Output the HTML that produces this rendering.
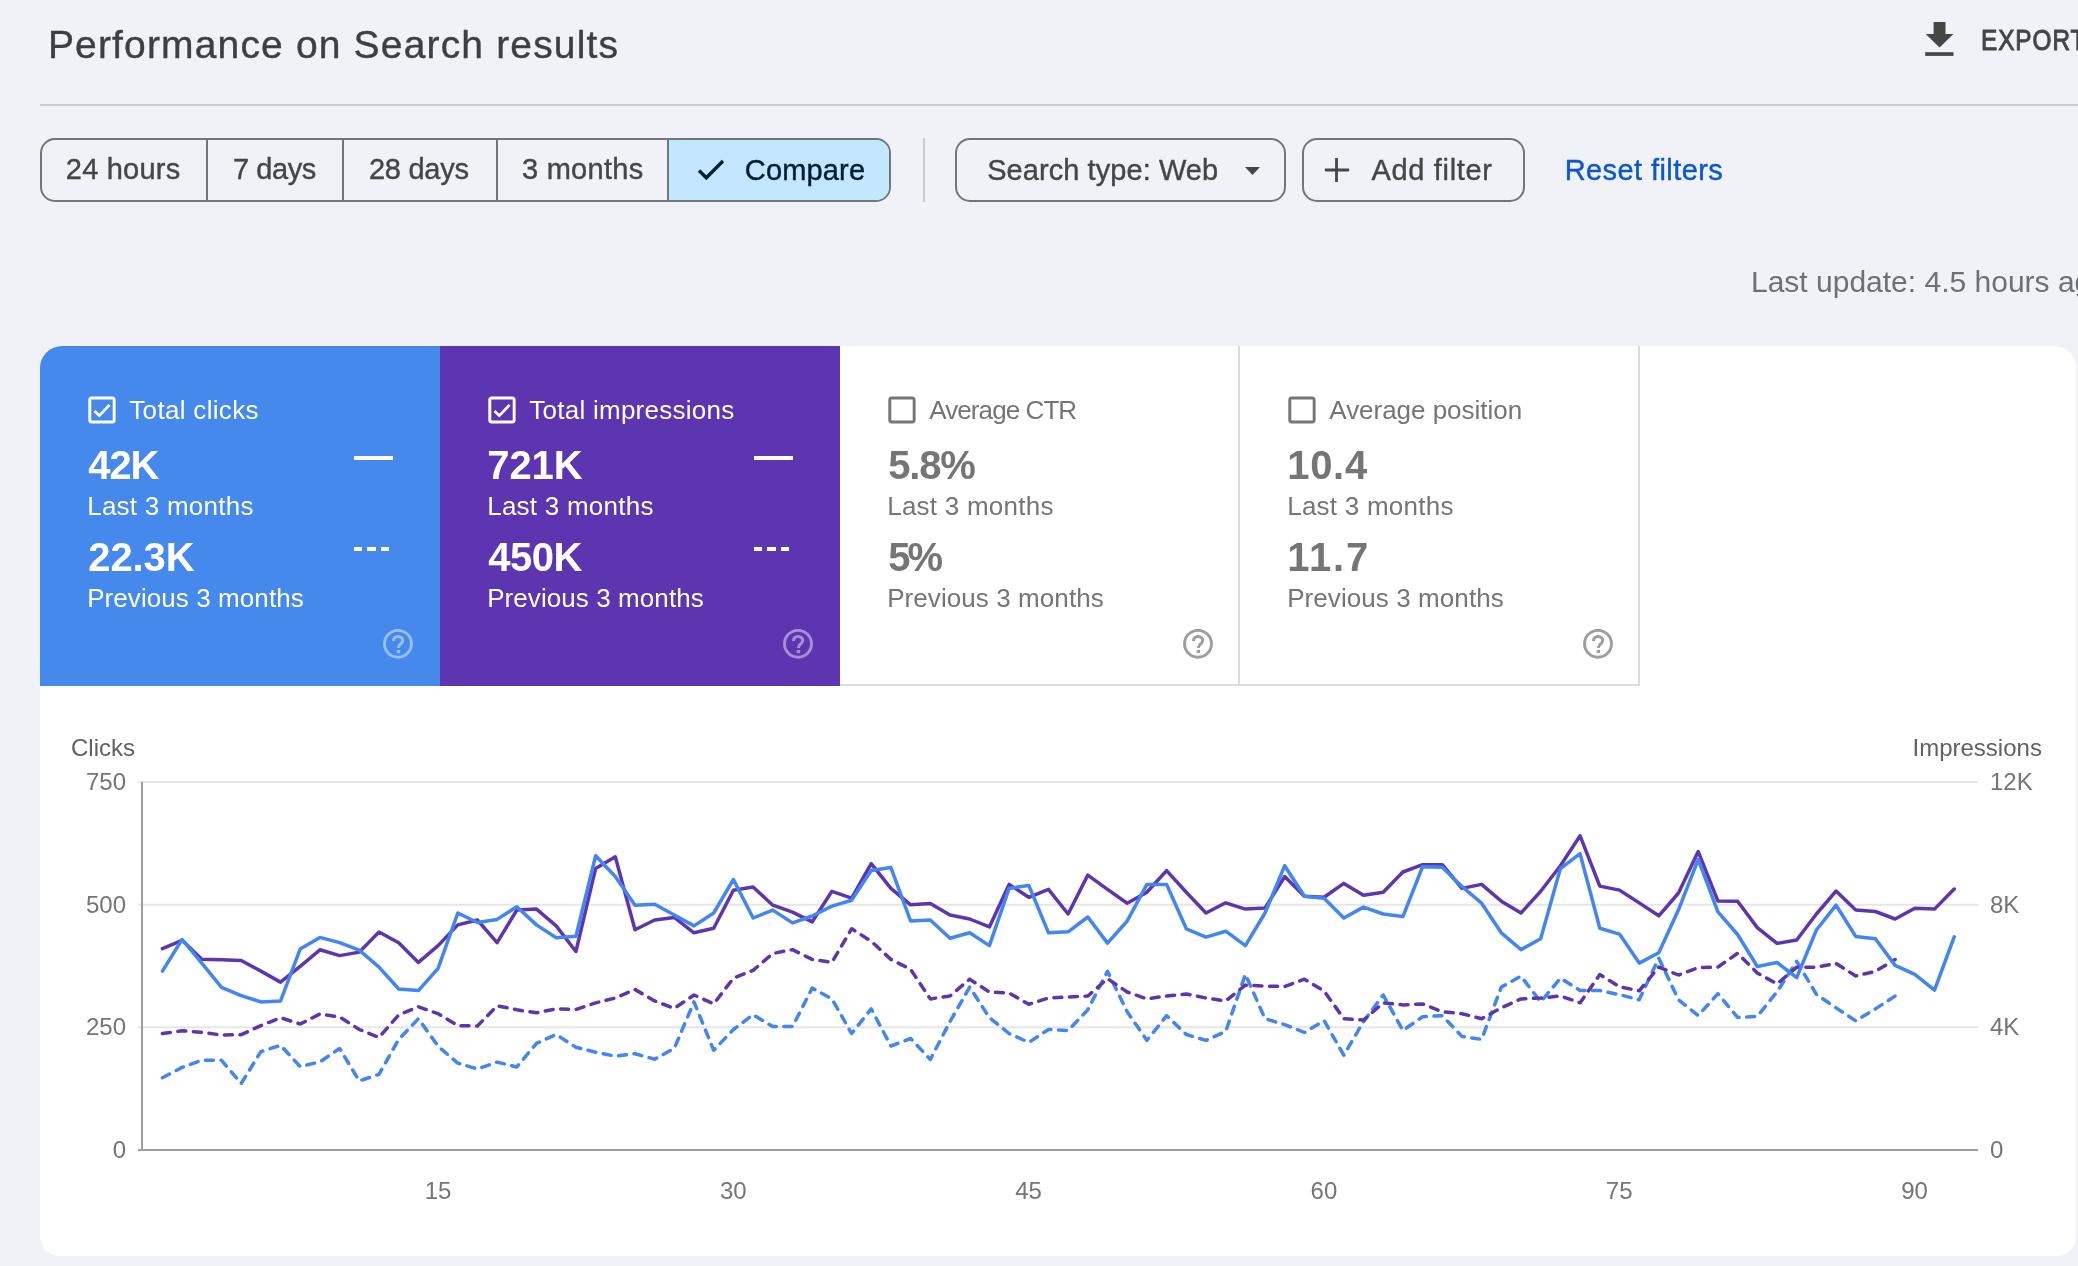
<!DOCTYPE html>
<html><head><meta charset="utf-8"><style>
html,body{margin:0;padding:0;width:2078px;height:1266px;overflow:hidden;background:#f0f2f7;font-family:"Liberation Sans", sans-serif;}
</style></head><body><div style="position:absolute;left:0;top:0;width:2078px;height:1266px;will-change:transform">
<div style="position:absolute;left:47.9px;top:25.1px;font-size:39px;line-height:39px;font-weight:400;color:#3c4043;letter-spacing:1.161px;white-space:nowrap;-webkit-text-stroke:0.4px #3c4043;">Performance on Search results</div>
<svg style="position:absolute;left:1920px;top:18px" width="40" height="42" viewBox="0 0 40 42"><path d="M13.6 4.1h11.9v11.9h7.9L19.55 29.6 5.7 16h7.9z" fill="#444746"/><rect x="5.2" y="34.2" width="28.3" height="3.7" fill="#444746"/></svg>
<div style="position:absolute;left:1980.5px;top:25.5px;font-size:29px;line-height:29px;font-weight:400;color:#444746;letter-spacing:1.1px;white-space:nowrap;transform:scaleX(0.84);transform-origin:0 0;-webkit-text-stroke:1.0px #444746;">EXPORT</div>
<div style="position:absolute;left:40px;top:104px;width:2038px;height:2px;box-sizing:border-box;background:#c7cacf"></div>
<div style="position:absolute;left:40px;top:138px;width:851px;height:64px;box-sizing:border-box;border:2px solid #71767b;border-radius:15px"></div>
<div style="position:absolute;left:205.5px;top:138px;width:2px;height:64px;box-sizing:border-box;background:#71767b"></div>
<div style="position:absolute;left:342px;top:138px;width:2px;height:64px;box-sizing:border-box;background:#71767b"></div>
<div style="position:absolute;left:495.5px;top:138px;width:2px;height:64px;box-sizing:border-box;background:#71767b"></div>
<div style="position:absolute;left:668px;top:140px;width:221px;height:60px;box-sizing:border-box;background:#c2e7ff;border-radius:0 13px 13px 0"></div>
<div style="position:absolute;left:667px;top:138px;width:2px;height:64px;box-sizing:border-box;background:#71767b"></div>
<div style="position:absolute;left:65.8px;top:154.5px;font-size:29px;line-height:29px;font-weight:400;color:#444746;letter-spacing:0.214px;white-space:nowrap;-webkit-text-stroke:0.4px #444746;">24 hours</div>
<div style="position:absolute;left:233.0px;top:154.5px;font-size:29px;line-height:29px;font-weight:400;color:#444746;letter-spacing:-0.44px;white-space:nowrap;-webkit-text-stroke:0.4px #444746;">7 days</div>
<div style="position:absolute;left:369.0px;top:154.5px;font-size:29px;line-height:29px;font-weight:400;color:#444746;letter-spacing:-0.267px;white-space:nowrap;-webkit-text-stroke:0.4px #444746;">28 days</div>
<div style="position:absolute;left:521.9px;top:154.5px;font-size:29px;line-height:29px;font-weight:400;color:#444746;letter-spacing:0.286px;white-space:nowrap;-webkit-text-stroke:0.4px #444746;">3 months</div>
<svg style="position:absolute;left:696px;top:157.4px" width="30" height="24" viewBox="0 0 30 24"><path d="M3 13.5l7.3 7.3L27 4" fill="none" stroke="#001d35" stroke-width="3.4"/></svg>
<div style="position:absolute;left:744.8px;top:155.5px;font-size:29px;line-height:29px;font-weight:400;color:#001d35;letter-spacing:0.167px;white-space:nowrap;-webkit-text-stroke:0.4px #001d35;">Compare</div>
<div style="position:absolute;left:923px;top:138px;width:2px;height:64px;box-sizing:border-box;background:#c7cacf"></div>
<div style="position:absolute;left:955px;top:138px;width:331px;height:64px;box-sizing:border-box;border:2px solid #71767b;border-radius:15px"></div>
<div style="position:absolute;left:987.2px;top:155.5px;font-size:29px;line-height:29px;font-weight:400;color:#444746;letter-spacing:0.067px;white-space:nowrap;-webkit-text-stroke:0.4px #444746;">Search type: Web</div>
<svg style="position:absolute;left:1244px;top:166px" width="17" height="10" viewBox="0 0 17 10"><path d="M1 1h15l-7.5 8z" fill="#444746"/></svg>
<div style="position:absolute;left:1302px;top:138px;width:223px;height:64px;box-sizing:border-box;border:2px solid #71767b;border-radius:15px"></div>
<svg style="position:absolute;left:1322px;top:156px" width="28" height="28" viewBox="0 0 28 28"><path d="M14.5 2v24" stroke="#444746" stroke-width="2.8"/><path d="M4 14h22" stroke="#444746" stroke-width="2.8" stroke-linecap="round"/></svg>
<div style="position:absolute;left:1371.5px;top:155.5px;font-size:29px;line-height:29px;font-weight:400;color:#444746;letter-spacing:0.667px;white-space:nowrap;-webkit-text-stroke:0.4px #444746;">Add filter</div>
<div style="position:absolute;left:1564.7px;top:155.5px;font-size:29px;line-height:29px;font-weight:400;color:#0b57d0;letter-spacing:0.417px;white-space:nowrap;-webkit-text-stroke:0.4px #0b57d0;">Reset filters</div>
<div style="position:absolute;left:1751.0px;top:266.6px;font-size:30px;line-height:30px;font-weight:400;color:#6d7175;letter-spacing:0px;white-space:nowrap;">Last update: 4.5 hours ago</div>
<div style="position:absolute;left:40px;top:346px;width:2036px;height:910px;box-sizing:border-box;background:#fff;border-radius:22px 22px 20px 20px"></div>
<div style="position:absolute;left:40px;top:346px;width:400px;height:340px;box-sizing:border-box;background:#4689ec;border-radius:22px 0 0 0"></div>
<div style="position:absolute;left:440px;top:346px;width:400px;height:340px;box-sizing:border-box;background:#5e35b1"></div>
<div style="position:absolute;left:840px;top:346px;width:400px;height:340px;box-sizing:border-box;border-right:2px solid #dcdcdc;border-bottom:2px solid #dcdcdc"></div>
<div style="position:absolute;left:1240px;top:346px;width:400px;height:340px;box-sizing:border-box;border-right:2px solid #dcdcdc;border-bottom:2px solid #dcdcdc"></div>
<svg style="position:absolute;left:88px;top:396px" width="28" height="28" viewBox="0 0 28 28"><path d="M3.8 0.4H24.1A3.5 3.5 0 0 1 27.6 3.9V24.1A3.5 3.5 0 0 1 24.1 27.6H3.8A3.5 3.5 0 0 1 0.3 24.1V3.9A3.5 3.5 0 0 1 3.8 0.4Z M3.3 3.5V24.6H24.7V3.5Z" fill="#ffffff" fill-rule="evenodd"/><path d="M6.4 15.1L11.3 19.6L21.6 8.9" fill="none" stroke="#ffffff" stroke-width="2.7"/></svg>
<div style="position:absolute;left:129.3px;top:397.0px;font-size:26px;line-height:26px;font-weight:400;color:#ffffff;letter-spacing:0.318px;white-space:nowrap;">Total clicks</div>
<div style="position:absolute;left:88.3px;top:445.3px;font-size:40px;line-height:40px;font-weight:700;color:#ffffff;letter-spacing:-1.1px;white-space:nowrap;">42K</div>
<div style="position:absolute;left:87.2px;top:492.8px;font-size:26px;line-height:26px;font-weight:400;color:#ffffff;letter-spacing:0.242px;white-space:nowrap;">Last 3 months</div>
<div style="position:absolute;left:88.3px;top:537.1px;font-size:40px;line-height:40px;font-weight:700;color:#ffffff;letter-spacing:-0.1px;white-space:nowrap;">22.3K</div>
<div style="position:absolute;left:87.2px;top:584.8px;font-size:26px;line-height:26px;font-weight:400;color:#ffffff;letter-spacing:0.075px;white-space:nowrap;">Previous 3 months</div>
<svg style="position:absolute;left:383px;top:629px" width="30" height="30" viewBox="0 0 30 30"><circle cx="15" cy="14.8" r="13.5" fill="none" stroke="rgba(255,255,255,0.45)" stroke-width="2.9"/><path d="M10.4 12C10.4 9.3 12.5 7.4 15.1 7.4C17.7 7.4 19.7 9.3 19.7 11.6C19.7 14.7 15.4 15.3 15.4 18.9" fill="none" stroke="rgba(255,255,255,0.45)" stroke-width="3"/><rect x="13.7" y="21" width="3.4" height="3.2" fill="rgba(255,255,255,0.45)"/></svg>
<div style="position:absolute;left:353.5px;top:455.5px;width:39px;height:4px;box-sizing:border-box;background:#fff"></div>
<div style="position:absolute;left:353.5px;top:546.5px;width:8.5px;height:4px;box-sizing:border-box;background:#fff"></div>
<div style="position:absolute;left:367.0px;top:546.5px;width:8.5px;height:4px;box-sizing:border-box;background:#fff"></div>
<div style="position:absolute;left:380.5px;top:546.5px;width:8.5px;height:4px;box-sizing:border-box;background:#fff"></div>
<svg style="position:absolute;left:488px;top:396px" width="28" height="28" viewBox="0 0 28 28"><path d="M3.8 0.4H24.1A3.5 3.5 0 0 1 27.6 3.9V24.1A3.5 3.5 0 0 1 24.1 27.6H3.8A3.5 3.5 0 0 1 0.3 24.1V3.9A3.5 3.5 0 0 1 3.8 0.4Z M3.3 3.5V24.6H24.7V3.5Z" fill="#ffffff" fill-rule="evenodd"/><path d="M6.4 15.1L11.3 19.6L21.6 8.9" fill="none" stroke="#ffffff" stroke-width="2.7"/></svg>
<div style="position:absolute;left:529.3px;top:397.0px;font-size:26px;line-height:26px;font-weight:400;color:#ffffff;letter-spacing:0.25px;white-space:nowrap;">Total impressions</div>
<div style="position:absolute;left:487.3px;top:445.3px;font-size:40px;line-height:40px;font-weight:700;color:#ffffff;letter-spacing:-0.1px;white-space:nowrap;">721K</div>
<div style="position:absolute;left:487.2px;top:492.8px;font-size:26px;line-height:26px;font-weight:400;color:#ffffff;letter-spacing:0.242px;white-space:nowrap;">Last 3 months</div>
<div style="position:absolute;left:488.3px;top:537.1px;font-size:40px;line-height:40px;font-weight:700;color:#ffffff;letter-spacing:-0.533px;white-space:nowrap;">450K</div>
<div style="position:absolute;left:487.2px;top:584.8px;font-size:26px;line-height:26px;font-weight:400;color:#ffffff;letter-spacing:0.075px;white-space:nowrap;">Previous 3 months</div>
<svg style="position:absolute;left:783px;top:629px" width="30" height="30" viewBox="0 0 30 30"><circle cx="15" cy="14.8" r="13.5" fill="none" stroke="rgba(255,255,255,0.45)" stroke-width="2.9"/><path d="M10.4 12C10.4 9.3 12.5 7.4 15.1 7.4C17.7 7.4 19.7 9.3 19.7 11.6C19.7 14.7 15.4 15.3 15.4 18.9" fill="none" stroke="rgba(255,255,255,0.45)" stroke-width="3"/><rect x="13.7" y="21" width="3.4" height="3.2" fill="rgba(255,255,255,0.45)"/></svg>
<div style="position:absolute;left:753.5px;top:455.5px;width:39px;height:4px;box-sizing:border-box;background:#fff"></div>
<div style="position:absolute;left:753.5px;top:546.5px;width:8.5px;height:4px;box-sizing:border-box;background:#fff"></div>
<div style="position:absolute;left:767.0px;top:546.5px;width:8.5px;height:4px;box-sizing:border-box;background:#fff"></div>
<div style="position:absolute;left:780.5px;top:546.5px;width:8.5px;height:4px;box-sizing:border-box;background:#fff"></div>
<svg style="position:absolute;left:888px;top:396px" width="28" height="28" viewBox="0 0 28 28"><path d="M3.8 0.4H24.1A3.5 3.5 0 0 1 27.6 3.9V24.1A3.5 3.5 0 0 1 24.1 27.6H3.8A3.5 3.5 0 0 1 0.3 24.1V3.9A3.5 3.5 0 0 1 3.8 0.4Z M3.3 3.5V24.6H24.7V3.5Z" fill="#757575" fill-rule="evenodd"/></svg>
<div style="position:absolute;left:929.3px;top:397.0px;font-size:26px;line-height:26px;font-weight:400;color:#757575;letter-spacing:-0.92px;white-space:nowrap;">Average CTR</div>
<div style="position:absolute;left:888.3px;top:445.3px;font-size:40px;line-height:40px;font-weight:700;color:#757575;letter-spacing:-1.2px;white-space:nowrap;">5.8%</div>
<div style="position:absolute;left:887.2px;top:492.8px;font-size:26px;line-height:26px;font-weight:400;color:#757575;letter-spacing:0.242px;white-space:nowrap;">Last 3 months</div>
<div style="position:absolute;left:888.3px;top:537.1px;font-size:40px;line-height:40px;font-weight:700;color:#757575;letter-spacing:-3.0px;white-space:nowrap;">5%</div>
<div style="position:absolute;left:887.2px;top:584.8px;font-size:26px;line-height:26px;font-weight:400;color:#757575;letter-spacing:0.075px;white-space:nowrap;">Previous 3 months</div>
<svg style="position:absolute;left:1183px;top:629px" width="30" height="30" viewBox="0 0 30 30"><circle cx="15" cy="14.8" r="13.5" fill="none" stroke="#9e9e9e" stroke-width="2.9"/><path d="M10.4 12C10.4 9.3 12.5 7.4 15.1 7.4C17.7 7.4 19.7 9.3 19.7 11.6C19.7 14.7 15.4 15.3 15.4 18.9" fill="none" stroke="#9e9e9e" stroke-width="3"/><rect x="13.7" y="21" width="3.4" height="3.2" fill="#9e9e9e"/></svg>
<svg style="position:absolute;left:1288px;top:396px" width="28" height="28" viewBox="0 0 28 28"><path d="M3.8 0.4H24.1A3.5 3.5 0 0 1 27.6 3.9V24.1A3.5 3.5 0 0 1 24.1 27.6H3.8A3.5 3.5 0 0 1 0.3 24.1V3.9A3.5 3.5 0 0 1 3.8 0.4Z M3.3 3.5V24.6H24.7V3.5Z" fill="#757575" fill-rule="evenodd"/></svg>
<div style="position:absolute;left:1329.3px;top:397.0px;font-size:26px;line-height:26px;font-weight:400;color:#757575;letter-spacing:-0.027px;white-space:nowrap;">Average position</div>
<div style="position:absolute;left:1287.3px;top:445.3px;font-size:40px;line-height:40px;font-weight:700;color:#757575;letter-spacing:0.667px;white-space:nowrap;">10.4</div>
<div style="position:absolute;left:1287.2px;top:492.8px;font-size:26px;line-height:26px;font-weight:400;color:#757575;letter-spacing:0.242px;white-space:nowrap;">Last 3 months</div>
<div style="position:absolute;left:1287.3px;top:537.1px;font-size:40px;line-height:40px;font-weight:700;color:#757575;letter-spacing:1.733px;white-space:nowrap;">11.7</div>
<div style="position:absolute;left:1287.2px;top:584.8px;font-size:26px;line-height:26px;font-weight:400;color:#757575;letter-spacing:0.075px;white-space:nowrap;">Previous 3 months</div>
<svg style="position:absolute;left:1583px;top:629px" width="30" height="30" viewBox="0 0 30 30"><circle cx="15" cy="14.8" r="13.5" fill="none" stroke="#9e9e9e" stroke-width="2.9"/><path d="M10.4 12C10.4 9.3 12.5 7.4 15.1 7.4C17.7 7.4 19.7 9.3 19.7 11.6C19.7 14.7 15.4 15.3 15.4 18.9" fill="none" stroke="#9e9e9e" stroke-width="3"/><rect x="13.7" y="21" width="3.4" height="3.2" fill="#9e9e9e"/></svg>
<svg style="position:absolute;left:0;top:0" width="2078" height="1266" viewBox="0 0 2078 1266"><line x1="138" y1="782" x2="1978" y2="782" stroke="#e6e6e6" stroke-width="2"/><line x1="138" y1="904.7" x2="1978" y2="904.7" stroke="#e6e6e6" stroke-width="2"/><line x1="138" y1="1027.3" x2="1978" y2="1027.3" stroke="#e6e6e6" stroke-width="2"/><line x1="142" y1="782" x2="142" y2="1150" stroke="#9e9e9e" stroke-width="2"/><line x1="138" y1="1150" x2="1978" y2="1150" stroke="#9e9e9e" stroke-width="2"/><polyline points="162.4,1077.7 182.1,1067.4 201.8,1060.3 221.5,1060.3 241.2,1083.5 260.9,1051.6 280.5,1045.3 300.2,1066.6 319.9,1061.9 339.6,1048.5 359.3,1080.9 379.0,1074.3 398.7,1039.4 418.4,1018.7 438.1,1046.3 457.8,1063.1 477.4,1069.0 497.1,1062.1 516.8,1067.0 536.5,1043.4 556.2,1034.5 575.9,1047.3 595.6,1052.2 615.3,1056.2 635.0,1053.7 654.7,1059.2 674.3,1048.3 694.0,1001.9 713.7,1050.3 733.4,1029.5 753.1,1014.7 772.8,1026.6 792.5,1026.6 812.2,988.1 831.9,998.9 851.6,1033.5 871.2,1008.8 890.9,1046.0 910.6,1038.5 930.3,1059.5 950.0,1021.6 969.7,987.1 989.4,1017.7 1009.1,1033.5 1028.8,1042.4 1048.5,1029.5 1068.1,1030.5 1087.8,1009.8 1107.5,971.3 1127.2,1011.8 1146.9,1040.4 1166.6,1015.7 1186.3,1034.5 1206.0,1040.4 1225.7,1031.5 1245.4,974.3 1265.0,1018.7 1284.7,1024.6 1304.4,1032.5 1324.1,1020.6 1343.8,1055.2 1363.5,1021.6 1383.2,995.0 1402.9,1030.5 1422.6,1016.7 1442.3,1015.7 1461.9,1036.4 1481.6,1039.4 1501.3,987.1 1521.0,976.2 1540.7,1001.9 1560.4,978.2 1580.1,990.4 1599.8,990.6 1619.5,994.7 1639.2,999.7 1658.8,958.2 1678.5,999.7 1698.2,1015.5 1717.9,993.7 1737.6,1017.4 1757.3,1016.4 1777.0,991.8 1796.7,961.3 1816.4,994.4 1836.1,1007.9 1855.7,1020.8 1875.4,1008.9 1895.1,996.1" fill="none" stroke="#4285f4" stroke-width="3.5" stroke-linejoin="round" stroke-linecap="round" stroke-dasharray="8 7.6"/><polyline points="162.4,1033.5 182.1,1030.8 201.8,1032.4 221.5,1035.0 241.2,1034.7 260.9,1025.6 280.5,1017.7 300.2,1024.0 319.9,1014.0 339.6,1016.9 359.3,1029.5 379.0,1037.4 398.7,1015.0 418.4,1006.8 438.1,1013.7 457.8,1025.6 477.4,1026.0 497.1,1005.8 516.8,1009.8 536.5,1012.8 556.2,1008.8 575.9,1009.4 595.6,1002.9 615.3,998.0 635.0,989.5 654.7,1000.9 674.3,1008.4 694.0,995.0 713.7,1003.9 733.4,978.2 753.1,970.3 772.8,953.5 792.5,949.6 812.2,959.4 831.9,962.4 851.6,928.8 871.2,941.2 890.9,959.4 910.6,969.3 930.3,998.9 950.0,996.0 969.7,979.2 989.4,992.0 1009.1,993.0 1028.8,1004.3 1048.5,998.0 1068.1,997.0 1087.8,996.0 1107.5,978.7 1127.2,992.0 1146.9,998.9 1166.6,996.0 1186.3,994.0 1206.0,998.0 1225.7,1000.9 1245.4,985.1 1265.0,986.1 1284.7,986.5 1304.4,979.2 1324.1,991.0 1343.8,1018.7 1363.5,1020.1 1383.2,1002.9 1402.9,1004.9 1422.6,1003.9 1442.3,1011.8 1461.9,1013.7 1481.6,1018.7 1501.3,1007.8 1521.0,998.9 1540.7,998.0 1560.4,996.0 1580.1,1002.8 1599.8,974.6 1619.5,986.8 1639.2,990.8 1658.8,967.1 1678.5,975.0 1698.2,967.7 1717.9,967.1 1737.6,953.3 1757.3,973.0 1777.0,983.9 1796.7,967.2 1816.4,967.2 1836.1,963.5 1855.7,975.9 1875.4,971.4 1895.1,959.5" fill="none" stroke="#5e35b1" stroke-width="3.5" stroke-linejoin="round" stroke-linecap="round" stroke-dasharray="8 7.6"/><polyline points="162.4,948.6 182.1,940.3 201.8,959.2 221.5,959.7 241.2,960.5 260.9,971.1 280.5,982.1 300.2,966.3 319.9,949.8 339.6,955.6 359.3,952.1 379.0,932.0 398.7,942.7 418.4,962.4 438.1,945.6 457.8,924.9 477.4,920.0 497.1,942.7 516.8,910.1 536.5,909.1 556.2,925.9 575.9,951.5 595.6,868.6 615.3,856.8 635.0,929.8 654.7,920.0 674.3,917.4 694.0,932.8 713.7,928.3 733.4,890.3 753.1,887.0 772.8,905.2 792.5,912.1 812.2,921.9 831.9,891.3 851.6,898.2 871.2,863.7 890.9,888.4 910.6,904.8 930.3,903.6 950.0,915.0 969.7,919.0 989.4,926.9 1009.1,884.4 1028.8,897.3 1048.5,889.4 1068.1,914.0 1087.8,875.1 1107.5,889.4 1127.2,903.2 1146.9,892.3 1166.6,870.6 1186.3,892.3 1206.0,913.0 1225.7,902.8 1245.4,909.1 1265.0,908.1 1284.7,876.5 1304.4,896.3 1324.1,897.3 1343.8,883.4 1363.5,895.3 1383.2,892.3 1402.9,872.0 1422.6,864.7 1442.3,864.7 1461.9,888.4 1481.6,884.4 1501.3,901.2 1521.0,913.0 1540.7,891.3 1560.4,865.7 1580.1,835.8 1599.8,886.1 1619.5,890.1 1639.2,902.9 1658.8,915.8 1678.5,893.0 1698.2,851.6 1717.9,901.0 1737.6,901.3 1757.3,927.6 1777.0,943.4 1796.7,940.0 1816.4,914.0 1836.1,891.0 1855.7,910.1 1875.4,911.5 1895.1,919.0 1914.8,908.2 1934.5,909.1 1954.2,889.0" fill="none" stroke="#5e35b1" stroke-width="3.5" stroke-linejoin="round" stroke-linecap="round"/><polyline points="162.4,971.1 182.1,939.5 201.8,963.2 221.5,987.3 241.2,995.6 260.9,1001.9 280.5,1001.1 300.2,949.0 319.9,937.4 339.6,942.6 359.3,950.2 379.0,967.1 398.7,989.0 418.4,990.6 438.1,968.3 457.8,913.0 477.4,922.5 497.1,919.4 516.8,906.7 536.5,924.9 556.2,937.7 575.9,936.3 595.6,855.8 615.3,876.5 635.0,905.2 654.7,904.2 674.3,915.0 694.0,925.9 713.7,913.0 733.4,879.5 753.1,918.0 772.8,910.1 792.5,922.9 812.2,916.0 831.9,906.1 851.6,900.2 871.2,870.6 890.9,867.6 910.6,921.0 930.3,920.0 950.0,938.3 969.7,932.8 989.4,945.6 1009.1,888.4 1028.8,885.4 1048.5,932.8 1068.1,931.8 1087.8,917.0 1107.5,943.1 1127.2,921.0 1146.9,884.4 1166.6,884.4 1186.3,928.8 1206.0,937.1 1225.7,931.2 1245.4,945.6 1265.0,913.0 1284.7,865.7 1304.4,896.3 1324.1,898.2 1343.8,918.0 1363.5,907.1 1383.2,914.0 1402.9,916.6 1422.6,866.7 1442.3,867.2 1461.9,886.4 1481.6,903.2 1501.3,932.8 1521.0,949.6 1540.7,938.7 1560.4,868.6 1580.1,853.7 1599.8,928.2 1619.5,934.1 1639.2,963.1 1658.8,952.7 1678.5,909.8 1698.2,859.5 1717.9,911.8 1737.6,934.5 1757.3,966.5 1777.0,962.5 1796.7,977.6 1816.4,930.0 1836.1,905.2 1855.7,936.4 1875.4,938.8 1895.1,965.4 1914.8,974.3 1934.5,990.1 1954.2,936.8" fill="none" stroke="#4285f4" stroke-width="3.5" stroke-linejoin="round" stroke-linecap="round"/></svg>
<div style="position:absolute;left:71.0px;top:735.7px;font-size:24px;line-height:24px;font-weight:400;color:#616161;letter-spacing:0px;white-space:nowrap;">Clicks</div>
<div style="position:absolute;left:1912.5px;top:735.7px;font-size:24px;line-height:24px;font-weight:400;color:#616161;letter-spacing:0px;white-space:nowrap;">Impressions</div>
<div style="position:absolute;right:1952px;top:769.7px;font-size:24px;line-height:24px;color:#757575">750</div>
<div style="position:absolute;right:1952px;top:892.7px;font-size:24px;line-height:24px;color:#757575">500</div>
<div style="position:absolute;right:1952px;top:1015.2px;font-size:24px;line-height:24px;color:#757575">250</div>
<div style="position:absolute;right:1952px;top:1138.2px;font-size:24px;line-height:24px;color:#757575">0</div>
<div style="position:absolute;left:1990.0px;top:769.7px;font-size:24px;line-height:24px;font-weight:400;color:#757575;letter-spacing:0px;white-space:nowrap;">12K</div>
<div style="position:absolute;left:1990.0px;top:892.7px;font-size:24px;line-height:24px;font-weight:400;color:#757575;letter-spacing:0px;white-space:nowrap;">8K</div>
<div style="position:absolute;left:1990.0px;top:1015.2px;font-size:24px;line-height:24px;font-weight:400;color:#757575;letter-spacing:0px;white-space:nowrap;">4K</div>
<div style="position:absolute;left:1990.0px;top:1138.2px;font-size:24px;line-height:24px;font-weight:400;color:#757575;letter-spacing:0px;white-space:nowrap;">0</div>
<div style="position:absolute;left:388.0px;width:100px;text-align:center;top:1178.7px;font-size:24px;line-height:24px;color:#757575">15</div>
<div style="position:absolute;left:683.3px;width:100px;text-align:center;top:1178.7px;font-size:24px;line-height:24px;color:#757575">30</div>
<div style="position:absolute;left:978.6px;width:100px;text-align:center;top:1178.7px;font-size:24px;line-height:24px;color:#757575">45</div>
<div style="position:absolute;left:1273.9px;width:100px;text-align:center;top:1178.7px;font-size:24px;line-height:24px;color:#757575">60</div>
<div style="position:absolute;left:1569.2px;width:100px;text-align:center;top:1178.7px;font-size:24px;line-height:24px;color:#757575">75</div>
<div style="position:absolute;left:1864.5px;width:100px;text-align:center;top:1178.7px;font-size:24px;line-height:24px;color:#757575">90</div>
</div></body></html>
